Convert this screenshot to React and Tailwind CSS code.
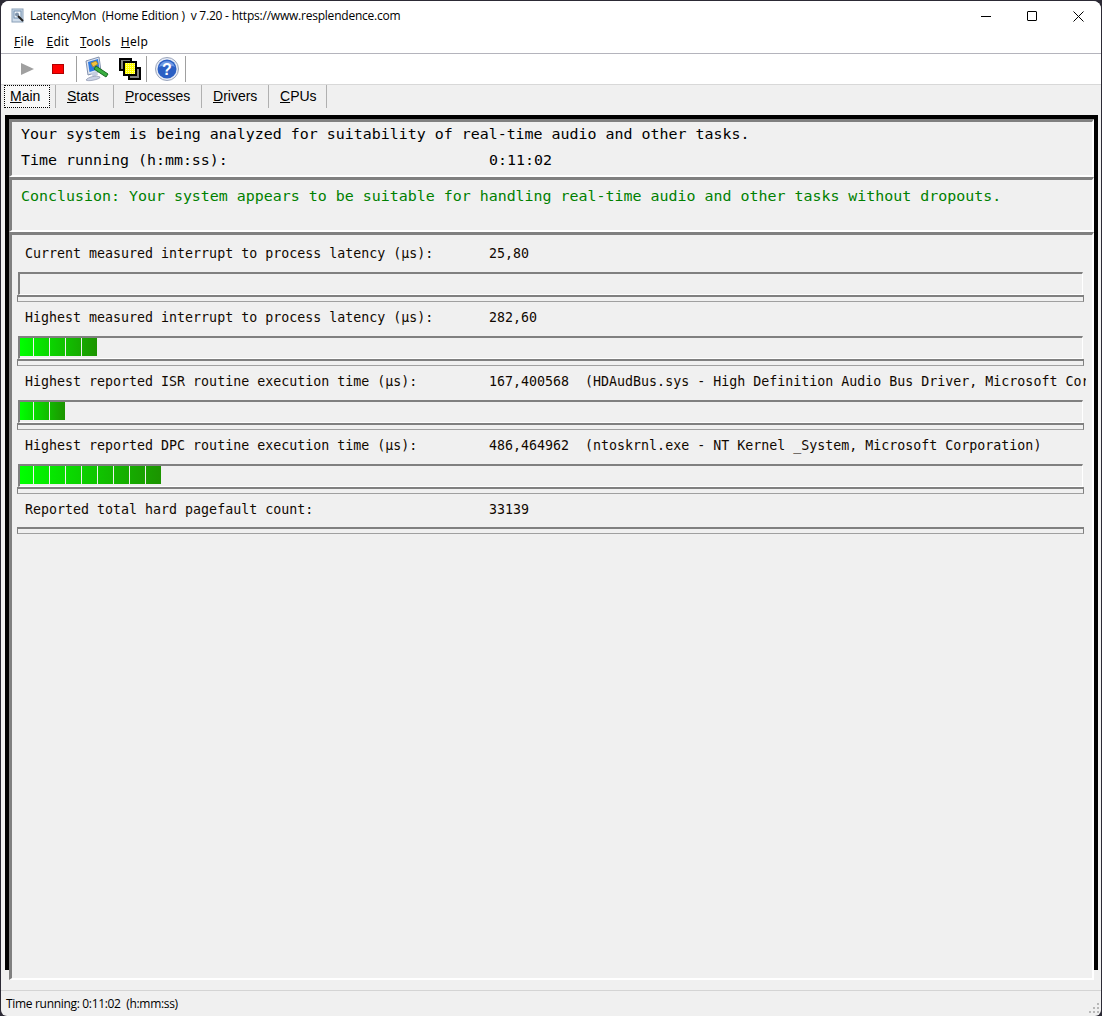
const mono = { fontFamily: '"DejaVu Sans Mono", monospace' };

function U({ children }) {
  return <span className="underline">{children}</span>;
}

function AppIcon() {
  return (
    <svg width="16" height="16" viewBox="0 0 16 16">
      <rect x="2" y="1" width="11" height="13" fill="#cfdcea" stroke="#8aa0b8" />
      <rect x="4" y="3" width="7" height="7" fill="#f4f8fc" stroke="#6f8cab" />
      <circle cx="7" cy="6.500" r="2" fill="#7f93aa" />
      <path d="M8 8l5 5" stroke="#222" strokeWidth="2" />
    </svg>
  );
}

function ConfigIcon() {
  return (
    <svg width="26" height="26" viewBox="0 0 26 26">
      <path d="M2 5l13-4 2 14-13 4z" fill="#dfe6f2" stroke="#8391ad" />
      <path d="M4 6l10-3 1.500 10-10 3z" fill="#2f7ae0" />
      <path d="M7 17l6-2 1 4-5 2z" fill="#c4cde0" />
      <path d="M2 24c2-3 10-5 14-3 1 2-12 5-14 3z" fill="#c9d1e4" stroke="#8a94ac" strokeWidth="0.700" />
      <path d="M7 7l5-2 2 3-5 3z" fill="#f2c23c" stroke="#a87f1c" strokeWidth="0.700" />
      <path d="M12 10l12 8-2 3-12-8z" fill="#38b040" stroke="#1b6a22" />
    </svg>
  );
}

function WindowsIcon() {
  return (
    <svg width="24" height="24" viewBox="0 0 24 24">
      <defs>
        <pattern id="dither" width="2" height="2" patternUnits="userSpaceOnUse">
          <rect width="2" height="2" fill="#ffff00" />
          <rect width="1" height="1" fill="#ffffa0" />
        </pattern>
      </defs>
      <rect x="11" y="11" width="11" height="11" fill="#808080" stroke="#000" strokeWidth="2" />
      <rect x="2" y="2" width="11" height="11" fill="#808080" stroke="#000" strokeWidth="2" />
      <rect x="6" y="5" width="12" height="13" fill="url(#dither)" stroke="#000" strokeWidth="2" />
    </svg>
  );
}

function HelpIcon() {
  return (
    <svg width="24" height="24" viewBox="0 0 24 24">
      <circle cx="12" cy="12" r="11.500" fill="#e6ebf5" stroke="#9aa5bb" />
      <circle cx="12" cy="12" r="9.500" fill="#2a5fc4" />
      <path d="M4 10a8.500 8.500 0 0 1 16 0c-4-2-12-2-16 0z" fill="#6f9be6" />
      <text x="12" y="18" textAnchor="middle" fontSize="16" fontWeight="700" fill="#fff" fontFamily="Liberation Sans, sans-serif">?</text>
    </svg>
  );
}

function Sep() {
  return <div className="w-px h-[26px] bg-[#a0a0a0]" />;
}

function Bar({ segments }) {
  return (
    <div className="h-[23px] ml-[6px] mr-[9px] border-t-2 border-l-2 border-[#808080] border-b border-r border-b-white border-r-white">
      {segments > 0 && (
        <div className="flex h-[18px] w-fit bg-[linear-gradient(to_right,#00ff00,#1c9400)]">
          {Array.from({ length: segments }).map((_, i) => (
            <div key={i} className="w-[16px] h-full border-r border-[#f0f0f0] first:w-[14px] last:w-[15px] last:border-r-0" />
          ))}
        </div>
      )}
    </div>
  );
}

function Flat() {
  return <div className="h-[7px] ml-[5px] mr-[8px] border border-[#808080] border-t-2 border-b-[#a0a0a0] bg-[#f0f0f0]" />;
}

function Row({ label, value, extra, segments, first, last }) {
  const size = first ? "h-[37px] pt-[11px]" : last ? "h-[33px] pt-[8px]" : "h-[34px] pt-[8px]";
  return (
    <div>
      <div className={`${size} pl-[13px] mr-[6px] flex text-[13.3px] leading-[16px] whitespace-nowrap overflow-hidden text-[#100800]`} style={mono}>
        <span className="w-[464px] shrink-0">{label}</span>
        <span className="shrink-0 whitespace-pre">{value}{extra ? "  " + extra : ""}</span>
      </div>
      {segments !== undefined && <Bar segments={segments} />}
      <Flat />
    </div>
  );
}

const panel = "border-t-[3px] border-l-[3px] border-[#808080] border-b-2 border-r-2 border-b-white border-r-white";

export default function App() {
  return (
    <div className="w-[1102px] h-[1016px] bg-[#2c2a35] overflow-hidden">
      <div className="w-[1100px] h-[1015px] ml-px mt-px rounded-t-[8px] rounded-b-[6px] overflow-hidden bg-[#f0f0f0] flex flex-col text-black" style={{ fontFamily: '"Open Sans", sans-serif' }}>
        {/* Title bar */}
        <div className="h-[30px] bg-white flex items-center shrink-0 pl-[9px]">
          <AppIcon />
          <span className="ml-[4px] text-[12px] whitespace-pre tracking-[-0.22px]">LatencyMon  (Home Edition )  v 7.20 - https://www.resplendence.com</span>
          <div className="ml-auto flex items-center">
            <div className="w-[46px] flex justify-center"><div className="w-[10px] h-px bg-black" /></div>
            <div className="w-[46px] flex justify-center"><div className="w-[10px] h-[10px] border border-black rounded-[1px]" /></div>
            <div className="w-[46px] flex justify-center">
              <svg width="11" height="11" viewBox="0 0 11 11"><path d="M.5.5l10 10M10.500.5l-10 10" stroke="#000" fill="none" /></svg>
            </div>
          </div>
        </div>
        {/* Menu */}
        <div className="h-[23px] bg-white border-b border-[#b4b4bc] flex items-center shrink-0 pl-[13px] text-[12px] tracking-[0.3px]" style={{ fontFamily: '"Noto Sans", sans-serif' }}>
          <span><U>F</U>ile</span>
          <span className="ml-[12px]"><U>E</U>dit</span>
          <span className="ml-[11px]"><U>T</U>ools</span>
          <span className="ml-[10px]"><U>H</U>elp</span>
        </div>
        {/* Toolbar */}
        <div className="h-[31px] bg-white border-b border-[#d8d8d8] flex items-center shrink-0 pl-[20px]">
          <svg width="13" height="14" viewBox="0 0 13 14" className="shrink-0"><path d="M0 1l13 6-13 6z" fill="#a0a0a0" /></svg>
          <div className="w-[12px] h-[10px] bg-[#ff0000] ml-[18px] border border-[#b00000]" />
          <div className="ml-[12px]"><Sep /></div>
          <div className="ml-[7px]"><ConfigIcon /></div>
          <div className="ml-[8px]"><WindowsIcon /></div>
          <div className="ml-[4px]"><Sep /></div>
          <div className="ml-[8px]"><HelpIcon /></div>
          <div className="ml-[6px]"><Sep /></div>
        </div>
        {/* Tabs */}
        <div className="h-[24px] flex items-stretch shrink-0 pl-[3px] pb-px text-[14px] text-black" style={{ fontFamily: '"Liberation Sans", sans-serif' }}>
          <div className="w-[46px] flex items-center pl-[5px] pb-px border border-dotted border-black bg-[#f8f8f8]"><span><U>M</U>ain</span></div>
          <div className="w-[58px] ml-[5px] border-l border-[#b0b0b0] flex items-center pl-[11px] pb-px"><span><U>S</U>tats</span></div>
          <div className="w-[88px] border-l border-[#b0b0b0] flex items-center pl-[11px] pb-px"><span><U>P</U>rocesses</span></div>
          <div className="w-[67px] border-l border-[#b0b0b0] flex items-center pl-[11px] pb-px"><span><U>D</U>rivers</span></div>
          <div className="w-[59px] border-l border-r border-[#b0b0b0] flex items-center pl-[11px] pb-px"><span><U>C</U>PUs</span></div>
        </div>
        {/* Tab content */}
        <div className="mt-[6px] ml-[4px] mr-[3px] flex-1 flex flex-col min-h-0">
          <div className="h-[4px] bg-black shrink-0" />
          <div className="flex items-start flex-1 min-h-0">
            <div className="w-[4px] h-[851px] bg-black shrink-0" />
            <div className="flex-1 min-w-0 flex flex-col h-[861px]">
              <div className={`${panel} h-[58px] pl-[9px] text-[14.95px]`} style={mono}>
                <div className="h-[26px] leading-[24px] whitespace-nowrap">Your system is being analyzed for suitability of real-time audio and other tasks.</div>
                <div className="flex leading-[24px]"><span className="w-[468px]">Time running (h:mm:ss):</span><span>0:11:02</span></div>
              </div>
              <div className={`${panel} h-[55px] pl-[9px] pt-[2px] text-[14.95px] leading-[28px] text-[#008000] whitespace-nowrap`} style={mono}>
                Conclusion: Your system appears to be suitable for handling real-time audio and other tasks without dropouts.
              </div>
              <div className={`${panel} flex-1 min-h-0`}>
                <Row first label="Current measured interrupt to process latency (µs):" value="25,80" segments={0} />
                <Row label="Highest measured interrupt to process latency (µs):" value="282,60" segments={5} />
                <Row label="Highest reported ISR routine execution time (µs):" value="167,400568" extra="(HDAudBus.sys - High Definition Audio Bus Driver, Microsoft Corporation)" segments={3} />
                <Row label="Highest reported DPC routine execution time (µs):" value="486,464962" extra="(ntoskrnl.exe - NT Kernel _System, Microsoft Corporation)" segments={9} />
                <Row last label="Reported total hard pagefault count:" value="33139" />
              </div>
            </div>
            <div className="w-[4px] h-[851px] bg-black shrink-0" />
          </div>
        </div>
        {/* Status bar */}
        <div className="h-[26px] border-t border-[#d4d4d4] shrink-0 flex items-center pl-[5px] text-[12px] tracking-[-0.32px] whitespace-pre relative">
          Time running: 0:11:02  (h:mm:ss)
          <svg width="12" height="12" viewBox="0 0 12 12" className="absolute right-[1px] bottom-[2px]">
            <path d="M9 1h2v2H9zM5 5h2v2H5zM9 5h2v2H9zM1 9h2v2H1zM5 9h2v2H5zM9 9h2v2H9z" fill="#b8b8b8" />
          </svg>
        </div>
      </div>
    </div>
  );
}
